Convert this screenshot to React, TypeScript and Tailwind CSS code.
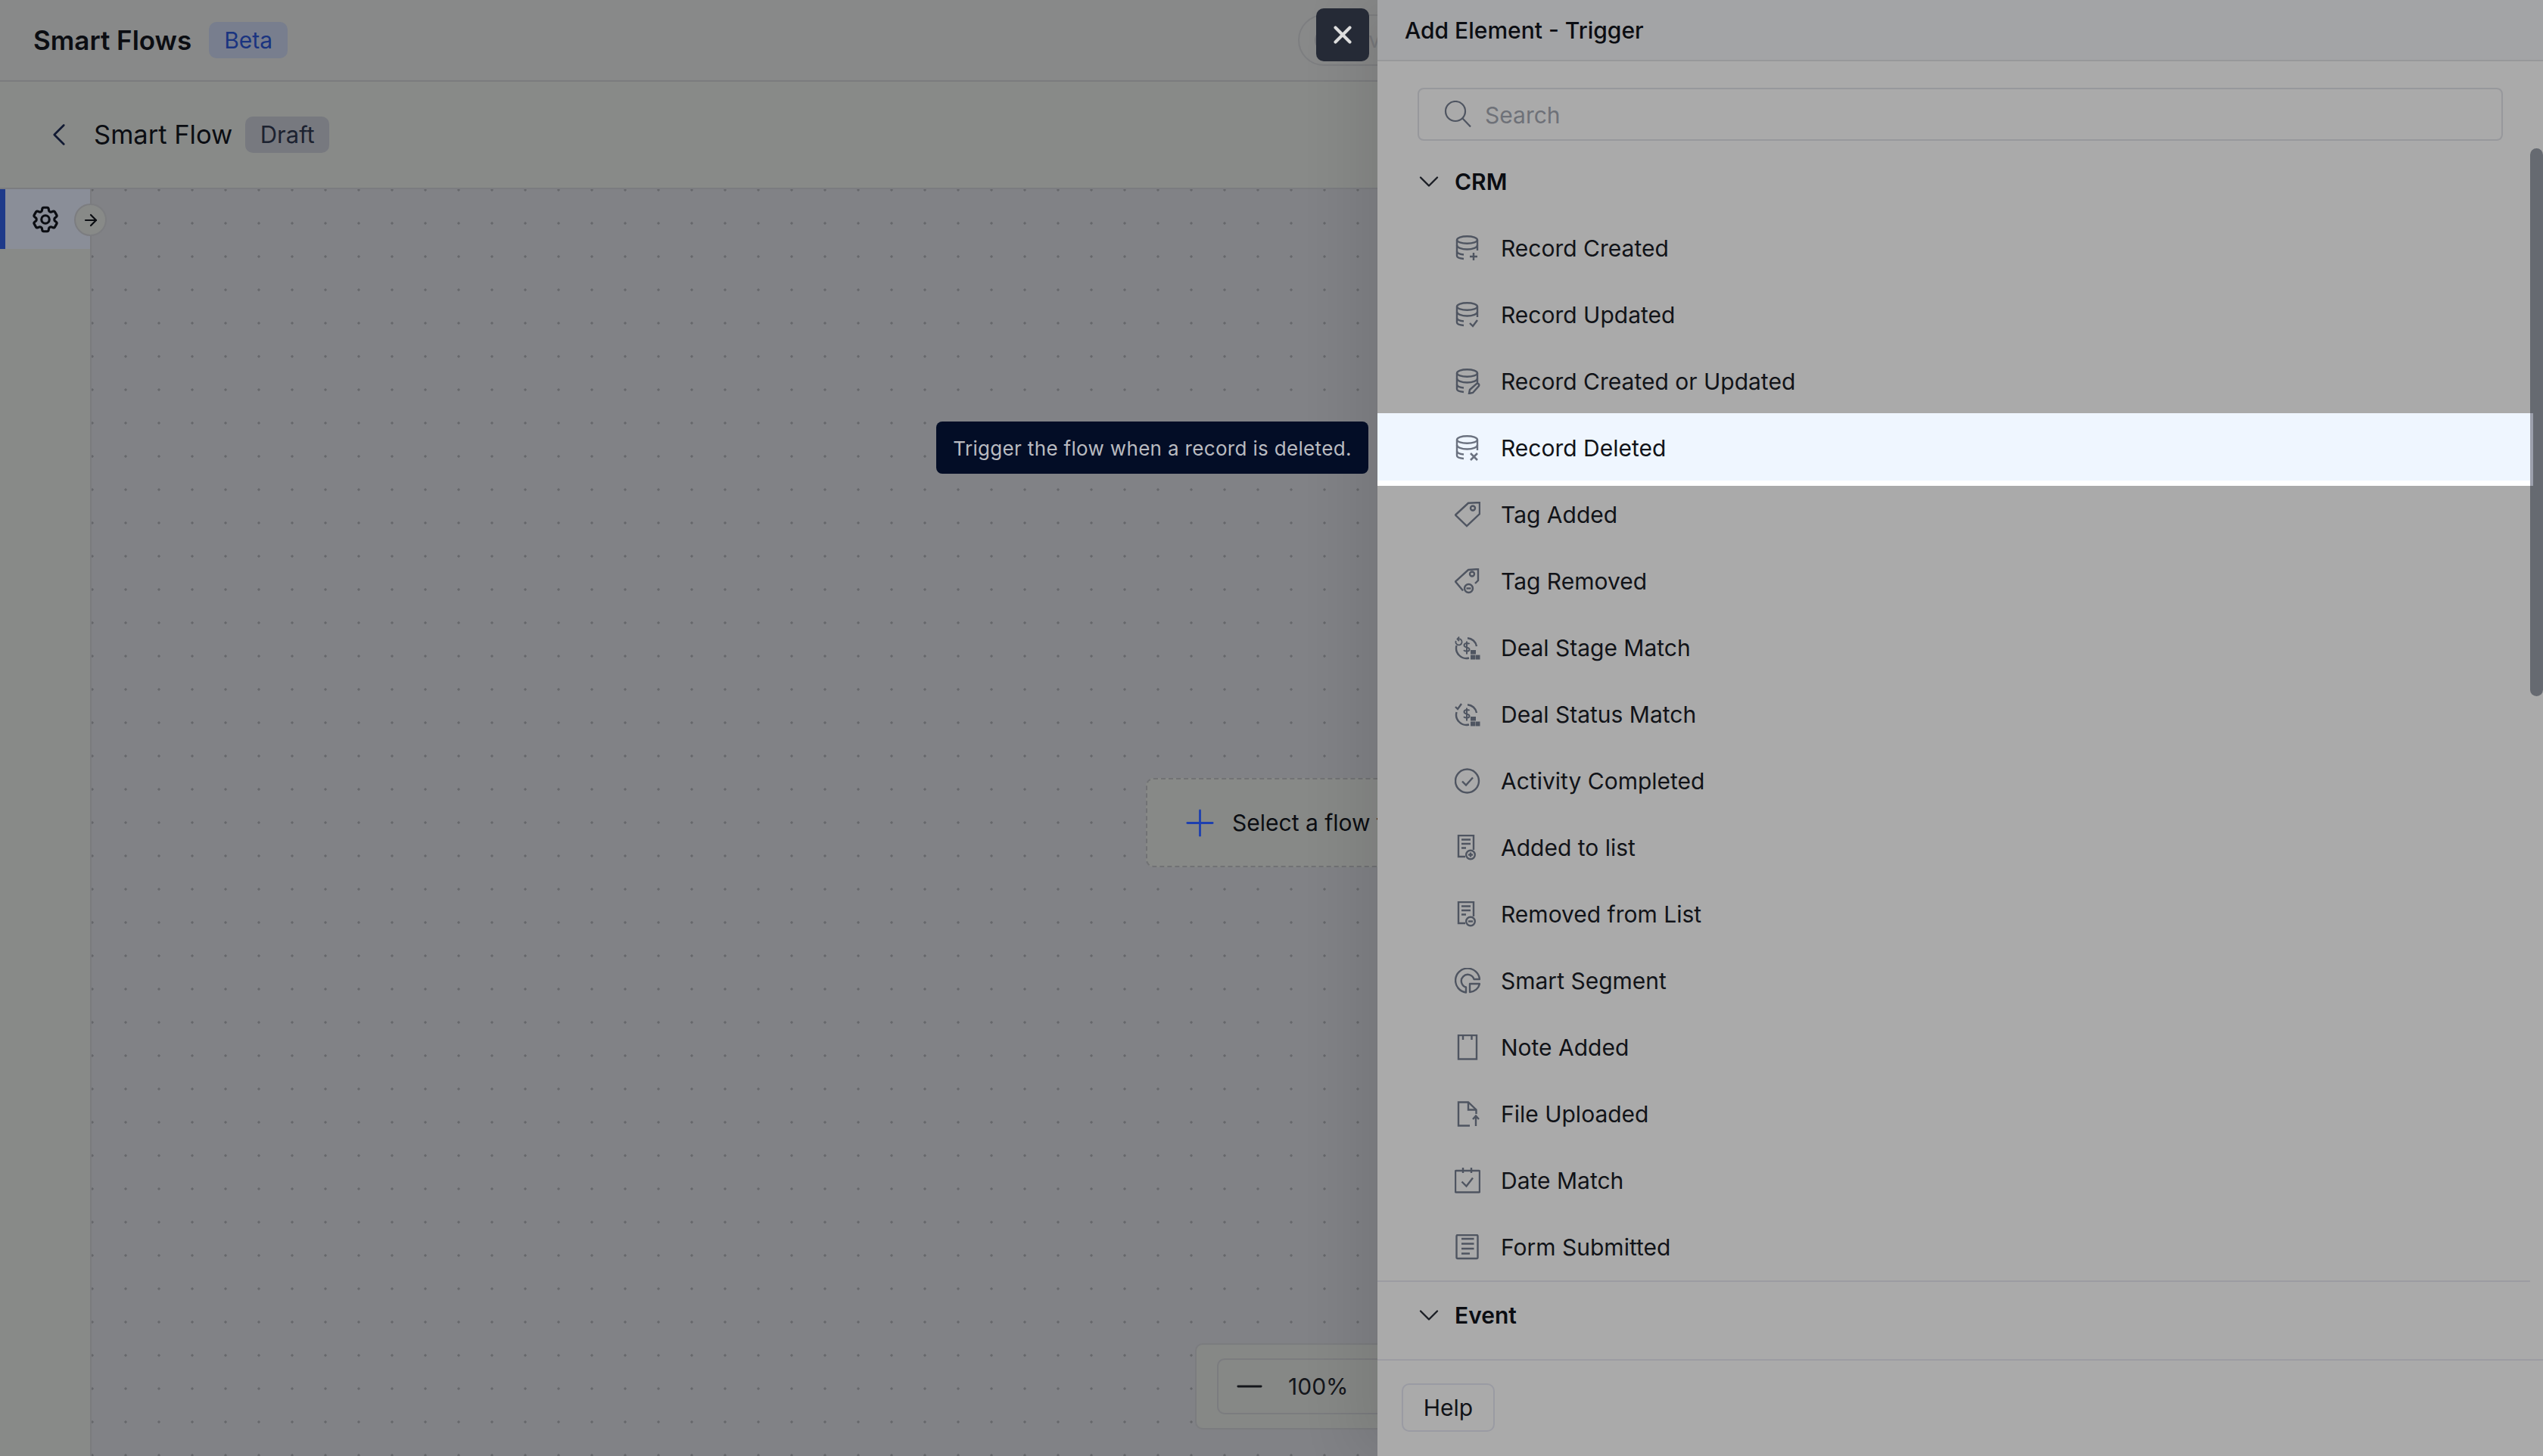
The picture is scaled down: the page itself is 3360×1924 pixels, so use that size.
import { ReactNode } from "react";
import { ArrowRight, ChevronDown, ChevronLeft, Minus, Plus, X } from "lucide-react";
import { HiOutlineCog6Tooth } from "react-icons/hi2";

const Icon = ({ children, faded }: { children: ReactNode; faded?: boolean }) => (
  <svg
    viewBox="0 0 34 34"
    fill="none"
    strokeWidth="2.4"
    stroke={faded ? "#6b7280" : "#4f5561"}
    className="h-[34px] w-[34px] shrink-0"
  >
    {children}
  </svg>
);

const Db = ({ faded, children }: { faded?: boolean; children: ReactNode }) => (
  <Icon faded={faded}>
    <ellipse cx="16.500" cy="6" rx="13.500" ry="4.800" />
    <path d="M3 6v21c0 2 3.500 3.500 9 4" />
    <path d="M3 13c0 3 6 5.500 13.500 5.500S30 16 30 13" />
    <path d="M3 21c0 2.500 3.500 4 9 4.500" />
    <path d="M30 6v14" />
    {children}
  </Icon>
);

const DealIcon = ({ children }: { children: ReactNode }) => (
  <Icon>
    <path d="M17 4.200A13 13 0 0 1 29 15" />
    <path d="M2.500 14A13.500 13.500 0 0 0 19 30.500" />
    <path strokeWidth="2" d="M19.500 12c-1-1.500-7-1.500-7 1.800 0 3.500 7 2 7 5.400 0 3-6 3-7.500 1M16 8.500v17" />
    <rect x="21.500" y="20.500" width="6" height="4.500" fill="#4f5561" strokeWidth="1" />
    <rect x="21.500" y="27" width="5" height="5" fill="#4f5561" strokeWidth="1" />
    <rect x="28" y="27" width="5" height="5" fill="#4f5561" strokeWidth="1" />
    {children}
  </Icon>
);

const rows: { label: string; icon: ReactNode; active?: boolean }[] = [
  { label: "Record Created", icon: <Db><path d="M25 23v10M20 28h10" /></Db> },
  { label: "Record Updated", icon: <Db><path d="M20 28l4 4 6-8" /></Db> },
  {
    label: "Record Created or Updated",
    icon: <Db><path d="M19 33l1-5 9-8c2-1 4 1 3 3l-8 9z" /></Db>,
  },
  { label: "Record Deleted", active: true, icon: <Db faded><path d="M21 24l9 9M30 24l-9 9" strokeWidth="2.600" /></Db> },
  {
    label: "Tag Added",
    icon: (
      <Icon>
        <path d="M1 17.500 18 1.800l15-.8V16L16 32z" />
        <circle cx="24" cy="8.500" r="3" />
      </Icon>
    ),
  },
  {
    label: "Tag Removed",
    icon: (
      <Icon>
        <path d="M11 29.500 1 17.500 18 2l13-1v15l-4 4" />
        <circle cx="23" cy="7.500" r="3" />
        <circle cx="18.500" cy="26.500" r="5.500" />
        <path d="M15.500 26.500h6" />
      </Icon>
    ),
  },
  {
    label: "Deal Stage Match",
    icon: (
      <DealIcon>
        <path d="M6 2.500l-2.500 3 2.500 2.500M4 5.500c3-1 6 1 5.500 4.500-.5 3-4 4.500-6.500 2.500-1.500-1.200-2-3-1.200-4.700" strokeWidth="1.800" />
      </DealIcon>
    ),
  },
  {
    label: "Deal Status Match",
    icon: (
      <DealIcon>
        <path d="M1 7l3 3 5-7" />
      </DealIcon>
    ),
  },
  {
    label: "Activity Completed",
    icon: (
      <Icon>
        <circle cx="16.500" cy="17" r="15.500" />
        <path d="M10 17.500l5 5 9-10" />
      </Icon>
    ),
  },
  {
    label: "Added to list",
    icon: (
      <Icon>
        <path d="M14 29H5V1h20v19" />
        <path d="M9 6.500h12M9 12h12M9 17.500h6" />
        <circle cx="21" cy="26.500" r="5.800" />
        <path d="M18 26.500h6M21 23.500v6" />
      </Icon>
    ),
  },
  {
    label: "Removed from List",
    icon: (
      <Icon>
        <path d="M14 29H5V1h20v19" />
        <path d="M9 6.500h12M9 12h12M9 17.500h6" />
        <circle cx="21" cy="26.500" r="5.800" />
        <path d="M18 26.500h6" />
      </Icon>
    ),
  },
  {
    label: "Smart Segment",
    icon: (
      <Icon>
        <path d="M15 32.500A16 16 0 1 1 33 15h-7.500A8.500 8.500 0 1 0 15 25.500z" strokeLinejoin="round" />
        <path d="M20 21h13A14 14 0 0 1 20 32z" strokeLinejoin="round" />
      </Icon>
    ),
  },
  {
    label: "Note Added",
    icon: (
      <Icon>
        <rect x="5" y="1" width="24" height="31.500" />
        <path d="M11 2v5M22.500 2v5" />
      </Icon>
    ),
  },
  {
    label: "File Uploaded",
    icon: (
      <Icon>
        <path d="M20 32.500H5V1.500h13l10.500 10V17" />
        <path d="M18 1.500V11.500h10.500" />
        <path d="M28 33V20M24 24l4-4.500 4 4.500" />
      </Icon>
    ),
  },
  {
    label: "Date Match",
    icon: (
      <Icon>
        <rect x="1" y="4" width="32" height="28.500" rx="1" />
        <path d="M11 0v7M22 0v7" />
        <path d="M9.500 18.500l6 6 8.500-11" />
      </Icon>
    ),
  },
  {
    label: "Form Submitted",
    icon: (
      <Icon>
        <rect x="2.500" y="1" width="28" height="31" rx="1.500" />
        <path d="M9 6h16.500M9 12.500h16.500M9 19h16.500M9 25.500h11" />
      </Icon>
    ),
  },
];

const SectionHeader = ({ title }: { title: string }) => (
  <div className="flex h-[88px] items-center pl-[53px] text-[30px] font-semibold text-[#0b0d12]">
    <ChevronDown size={44} strokeWidth={1.3} className="-ml-[7px] mr-[12px] shrink-0 text-[#1a1d24]" />
    {title}
  </div>
);

export default function App() {
  return (
    <div className="relative flex h-screen w-full overflow-hidden bg-[#aaaaaa] font-['Inter',sans-serif]">
      {/* page behind the drawer */}
      <div className="relative flex w-[1820px] shrink-0 flex-col overflow-hidden bg-[#818286]">
        <header className="flex h-[108px] shrink-0 items-center border-b-2 border-[#7b7c7e] bg-[#888989] pl-[44px]">
          <span className="text-[35px] font-semibold text-[#0b0d12]">Smart Flows</span>
          <span className="ml-[23px] flex h-[48px] w-[104px] items-center justify-center rounded-[10px] bg-[#787e8e] text-[30px] text-[#1a3480]">
            Beta
          </span>
        </header>
        <div className="flex h-[142px] shrink-0 items-center border-b-2 border-[#7b7c80] bg-[#888a88] pl-[53px]">
          <ChevronLeft size={50} strokeWidth={1.3} className="shrink-0 text-[#111a33]" />
          <span className="ml-[21px] text-[34.5px] text-[#0b0d12]">Smart Flow</span>
          <span className="ml-[17px] flex h-[48px] w-[111px] items-center justify-center rounded-[10px] bg-[#77797f] text-[31px] text-[#1c2230]">
            Draft
          </span>
        </div>
        <div className="flex min-h-0 flex-1">
          <aside className="relative w-[121px] shrink-0 border-r-2 border-[#7a7b7e] bg-[#888a88]">
            <div className="flex h-[79px] items-center border-l-[7px] border-[#1e3a8a] bg-[#8a8e98] pl-[32px]">
              <HiOutlineCog6Tooth size={42} strokeWidth={1.8} className="text-[#0b0d12]" />
            </div>
            <div className="absolute left-[98px] top-[19px] z-10 flex h-[43px] w-[43px] items-center justify-center rounded-full border-2 border-[#7c7d80] bg-[#888a88]">
              <ArrowRight size={24} strokeWidth={2.2} className="text-[#0b0d12]" />
            </div>
          </aside>
          <main className="relative flex-1 bg-[#818286] bg-[radial-gradient(circle,#66676b_1.5px,transparent_1.7px)] bg-[size:44px_44px] bg-[position:-21px_-21px]">
            <div className="absolute left-[1393px] top-[778px] flex h-[118px] w-[500px] items-center rounded-[10px] border-2 border-dashed border-[#717274] bg-[#878987] pl-[41px] text-[30px] text-[#0b0d12]">
              <Plus size={57} strokeWidth={1.2} className="mr-[14px] shrink-0 text-[#1e40af]" />
              <span className="whitespace-nowrap">Select a flow trigger</span>
            </div>
            <div className="absolute left-[1458px] top-[1525px] w-[500px] rounded-[10px] border-2 border-[#7b7c7f] bg-[#868886] py-[18px] pl-[27px]">
              <div className="flex h-[74px] items-center rounded-[10px] border-2 border-[#7b7c7f] pl-[15px] text-[30px] text-[#14161b]">
                <Minus size={52} strokeWidth={1.3} className="shrink-0" />
                <span className="ml-[25px]">100%</span>
              </div>
            </div>
          </main>
        </div>
        <div className="absolute left-[1715px] top-[19px] flex h-[68px] w-[200px] items-center gap-[8px] rounded-full border-2 border-[#7d7e80] pl-[20px] text-[28px] text-[#77787b]">
          <span className="h-[30px] w-[30px] rounded-full border-2 border-[#77787b]" />
          Save
        </div>
      </div>

      {/* drawer */}
      <section className="relative z-10 flex w-[1540px] shrink-0 flex-col bg-[#aaaaaa] shadow-[-30px_0_70px_rgba(0,0,0,0.09)]">
        <div className="flex h-[81px] shrink-0 items-center border-b-2 border-[#97989a] bg-[#a3a4a6] pl-[36px] pt-[1px] text-[30px] font-medium text-[#0b0d12]">
          Add Element - Trigger
        </div>
        <div className="h-[115px] shrink-0 px-[53px] pt-[35px]">
          <div className="flex h-[70px] items-center rounded-[8px] border-2 border-[#97989c] pl-[33px]">
            <svg viewBox="0 0 36 36" fill="none" stroke="#4f5561" strokeWidth="2.2" className="h-[36px] w-[36px] shrink-0">
              <circle cx="15" cy="14" r="13" />
              <path d="M24.500 23.500 35 34.500" />
            </svg>
            <span className="ml-[18px] pt-[3px] text-[30px] text-[#6e7178]">Search</span>
          </div>
        </div>
        <div className="relative min-h-0 flex-1 overflow-hidden">
          <div className="absolute right-0 top-0 h-[724px] w-[17px] rounded-full bg-[#666a71]" />
          <SectionHeader title="CRM" />
          {rows.map((row) =>
            row.active ? (
              <div
                key={row.label}
                className="relative z-10 -mb-[6px] -mt-[2px] mr-[13px] h-[96px] border-r-4 border-[#9ca0ac] bg-white"
              >
                <div className="flex h-[89px] items-center bg-[#eff6ff] pl-[102px] pt-[3px] text-[30px] text-[#111318]">
                  {row.icon}
                  <span className="ml-[27px]">{row.label}</span>
                </div>
              </div>
            ) : (
              <div key={row.label} className="flex h-[88px] items-center pl-[102px] text-[30px] text-[#111318]">
                {row.icon}
                <span className="ml-[27px]">{row.label}</span>
              </div>
            )
          )}
          <div className="mr-[17px] border-t-2 border-[#9c9ca2]">
            <SectionHeader title="Event" />
          </div>
        </div>
        <div className="h-[128px] shrink-0 border-t-2 border-[#9c9ca2] pl-[32px] pt-[30px]">
          <div className="flex h-[64px] w-[123px] items-center justify-center rounded-[10px] border-2 border-[#9a9ba3] text-[30px] text-[#111318]">
            Help
          </div>
        </div>
      </section>

      {/* close button and tooltip sit above the drawer shadow */}
      <button className="absolute left-[1739px] top-[11px] z-20 flex h-[70px] w-[70px] items-center justify-center rounded-[10px] bg-[#252a36] text-[#dddddd]">
        <X size={38} strokeWidth={2.6} />
      </button>
      <div className="absolute left-[1237px] top-[557px] z-20 flex h-[69px] w-[571px] items-center justify-center rounded-[8px] bg-[#030d26] pt-[2px] text-[26px] tracking-[0.33px] text-[#b9bbc0]">
        Trigger the flow when a record is deleted.
      </div>
    </div>
  );
}
